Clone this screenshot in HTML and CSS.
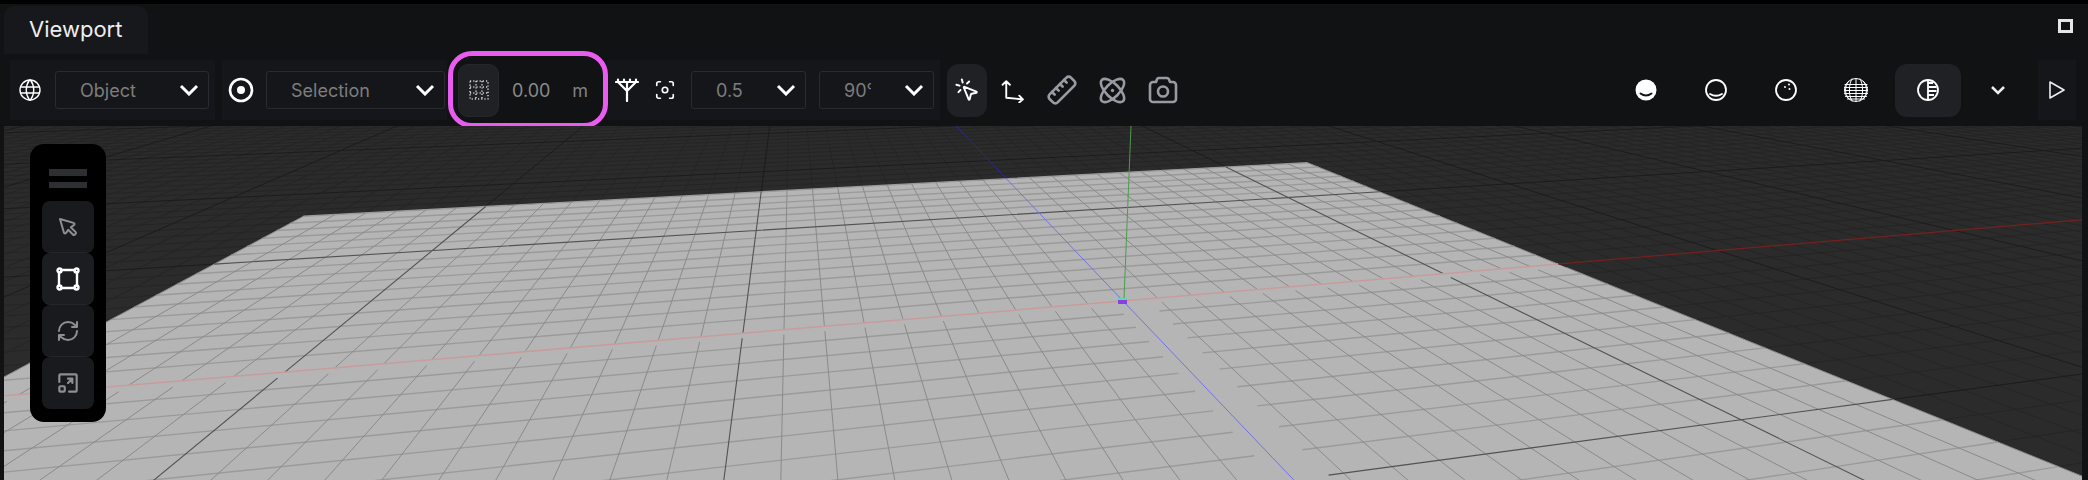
FILE: index.html
```html
<!DOCTYPE html>
<html lang="en">
<head>
    <meta charset="UTF-8">
    <meta name="viewport" content="width=device-width, initial-scale=1.0">
    <title>Viewport</title>
    <link rel="stylesheet" href="styles.css">
</head>
<body>
    <div class="app">
        <div class="tabbar">
            <div class="tab">Viewport</div>
            <div class="maximize"></div>
        </div>

        <div class="toolbar">
            <div class="group group-space">
                <svg class="icon icon-globe" width="24" height="24" viewBox="0 0 24 24"><circle cx="12" cy="12" r="10"/><path d="M2.8 9h18.4M2.800 15h18.4M11.500 2a17 17 0 0 0 0 20M12.500 2a17 17 0 0 1 0 20"/></svg>
                <div class="select select-object"><span>Object</span><svg class="chevron" width="20" height="12" viewBox="0 0 20 12"><path d="M2 2l8 8 8-8"/></svg></div>
            </div>
            <div class="group group-pivot">
                <svg class="icon icon-thick" width="26" height="26" viewBox="0 0 26 26"><circle cx="13" cy="13" r="11"/><circle class="fill" cx="13" cy="13" r="4"/></svg>
                <div class="select select-selection"><span>Selection</span><svg class="chevron" width="20" height="12" viewBox="0 0 20 12"><path d="M2 2l8 8 8-8"/></svg></div>
            </div>
            <div class="group group-snap">
                <div class="snap-btn">
                    <svg class="icon" width="20" height="20" viewBox="0 0 20 20"><path class="dots" d="M1 1H19V19H1ZM1 7H19M1 13H19M7 1V19M13 1V19"/></svg>
                </div>
                <span class="snap-value">0.00</span>
                <span class="snap-unit">m</span>
            </div>
            <div class="group group-angle">
                <svg class="icon icon-antenna" width="24" height="24" viewBox="0 0 24 24"><path d="M1 4H23M3 1.500V4M9 1.500V4M15 1.500V4M21 1.500V4M3 4l9 9 9-9M12 4V23"/></svg>
                <svg class="icon icon-focus" width="22" height="22" viewBox="0 0 24 24"><path d="M3 7V5a2 2 0 0 1 2-2h2M17 3h2a2 2 0 0 1 2 2v2M21 17v2a2 2 0 0 1-2 2h-2M7 21H5a2 2 0 0 1-2-2v-2"/><circle cx="12" cy="12" r="3"/></svg>
                <div class="select select-small"><span>0.5</span><svg class="chevron" width="20" height="12" viewBox="0 0 20 12"><path d="M2 2l8 8 8-8"/></svg></div>
                <div class="select select-small"><span class="clipped">90°</span><svg class="chevron" width="20" height="12" viewBox="0 0 20 12"><path d="M2 2l8 8 8-8"/></svg></div>
            </div>
            <div class="tool-active">
                <svg class="icon" width="26" height="26" viewBox="0 0 24 24"><path d="M14 4.100 12 6M5.100 8l-2.900-.8M6 12l-1.900 2M7.200 2.200 8 5.100"/><path d="M9.037 9.690a.498.498 0 0 1 .653-.653l11 4.500a.5.5 0 0 1-.074.949l-4.349 1.041a1 1 0 0 0-.74.739l-1.040 4.350a.5.5 0 0 1-.95.074z"/></svg>
            </div>
            <div class="tool">
                <svg class="icon" width="25" height="25" viewBox="0 0 24 24"><path d="M6 19V3M2.500 6.500 6 3l3.500 3.500M6 19l16 1.500M18.500 17l3.500 3.500-3.500 3"/></svg>
            </div>
            <div class="tool tool-grey">
                <svg class="icon flip" width="32" height="32" viewBox="0 0 24 24"><path d="M21.300 15.300a2.400 2.400 0 0 1 0 3.400l-2.600 2.600a2.400 2.400 0 0 1-3.400 0L2.700 8.700a2.410 2.410 0 0 1 0-3.400l2.600-2.600a2.410 2.410 0 0 1 3.400 0Z"/><path d="M14.500 12.500l2-2M11.500 9.500l2-2M8.500 6.500l2-2M17.500 15.500l2-2"/></svg>
            </div>
            <div class="tool tool-grey">
                <svg class="icon" width="31" height="31" viewBox="0 0 24 24"><circle class="fill" cx="12" cy="12" r="1.300"/><path d="M20.200 20.200c2.040-2.030.02-7.360-4.500-11.900-4.540-4.520-9.870-6.540-11.900-4.500-2.040 2.030-.02 7.360 4.500 11.900 4.540 4.520 9.870 6.540 11.900 4.500Z"/><path d="M15.700 15.700c4.520-4.540 6.540-9.870 4.500-11.900-2.030-2.040-7.360-.02-11.900 4.500-4.520 4.540-6.540 9.870-4.500 11.900 2.030 2.040 7.360.02 11.900-4.500Z"/></svg>
            </div>
            <div class="tool tool-last">
                <svg class="icon icon-camera" width="30" height="28" viewBox="0 0 30 28"><path d="M10.500 2H19a2 2 0 0 1 1.800 1.100L22 6H25a3 3 0 0 1 3 3V23a3 3 0 0 1-3 3H5a3 3 0 0 1-3-3V9a3 3 0 0 1 3-3H8L9 3.300A2 2 0 0 1 10.500 2Z"/><circle cx="15" cy="15.500" r="5"/></svg>
            </div>

            <div class="shading">
                <div class="shade">
                    <svg class="icon" width="24" height="24" viewBox="0 0 24 24"><circle class="fill" cx="12" cy="12" r="10.500"/><path class="cut" d="M6.500 15.500q5.500 4 11 0"/></svg>
                </div>
                <div class="shade">
                    <svg class="icon" width="24" height="24" viewBox="0 0 24 24"><circle cx="12" cy="12" r="10"/><path d="M6 16q6 3.500 12 0"/></svg>
                </div>
                <div class="shade">
                    <svg class="icon" width="24" height="24" viewBox="0 0 24 24"><circle cx="12" cy="12" r="10"/><circle class="fill" cx="11" cy="9" r="1"/><circle class="fill" cx="15" cy="6.500" r="1"/><circle class="fill" cx="15.500" cy="11" r="1"/></svg>
                </div>
                <div class="shade">
                    <svg class="icon icon-wire" width="26" height="26" viewBox="0 0 26 26"><circle cx="13" cy="13" r="11.500"/><path d="M2 7.500H24M1.500 10.500H24.500M1.500 13.500H24.500M1.500 16.500H24.500M2.500 19.500H23.500M4.500 22H21.500M13 1.500V24.500M9 2C5.500 7 5.500 19 9 24M17 2C20.500 7 20.500 19 17 24M5.500 4.500C1.500 10 1.500 16 5.500 21.500M20.500 4.500C24.500 10 24.500 16 20.500 21.500"/></svg>
                </div>
                <div class="shade-active">
                    <svg class="icon" width="24" height="24" viewBox="0 0 24 24"><circle cx="12" cy="12" r="10"/><path d="M12 2V22"/><path class="bars" d="M12 5H17M12 9H20.500M12 13H20.500M12 17H18"/></svg>
                </div>
                <div class="shade-more">
                    <svg class="chevron chevron-small" width="16" height="10" viewBox="0 0 16 10"><path d="M2 2l6 6 6-6"/></svg>
                </div>
                <div class="group group-play">
                    <svg class="icon icon-play" width="18" height="20" viewBox="0 0 18 20"><path d="M2 2L16 10L2 18Z"/></svg>
                </div>
            </div>
        </div>

        <div class="highlight"></div>

        <div class="scene">
            <svg class="scene-svg" viewBox="4 126 2078 354" preserveAspectRatio="none">
                <path id="outerMinor" class="outer-minor"/>
                <path id="outerMajor" class="outer-major"/>
                <polygon id="plane" class="plane"/>
                <path id="planeRows" class="plane-rows"/>
                <path id="planeMinor" class="plane-minor"/>
                <path id="planeMajor" class="plane-major"/>
                <path id="axisBlueOuter" class="axis-blue-outer"/>
                <path id="axisRedOuter" class="axis-red-outer"/>
                <path id="axisBlue" class="axis-blue"/>
                <path id="axisRed" class="axis-red"/>
                <path class="axis-green" d="M1124 299L1131 126"/>
                <rect class="origin-top" x="1118" y="298" width="9" height="3"/>
                <rect class="origin-box" x="1118" y="300" width="9" height="4"/>
            </svg>

            <div class="float-panel">
                <div class="handle"></div>
                <div class="handle"></div>
                <div class="float-btn">
                    <svg class="icon" width="24" height="24" viewBox="0 0 24 24"><path d="M7.904 17.563a1.200 1.200 0 0 0 2.228 .308l2.090 -3.093l4.907 4.907a1.067 1.067 0 0 0 1.509 0l1.047 -1.047a1.067 1.067 0 0 0 0 -1.509l-4.907 -4.907l3.113 -2.090a1.200 1.200 0 0 0 -.309 -2.228l-13.582 -3.904l3.904 13.563z"/></svg>
                </div>
                <div class="float-btn float-btn-active">
                    <svg class="icon icon-thick" width="24" height="24" viewBox="0 0 24 24"><path d="M5 3H19M5 21H19M3 5V19M21 5V19"/><circle cx="3.500" cy="3.500" r="2"/><circle cx="20.500" cy="3.500" r="2"/><circle cx="3.500" cy="20.500" r="2"/><circle cx="20.500" cy="20.500" r="2"/></svg>
                </div>
                <div class="float-btn">
                    <svg class="icon" width="24" height="24" viewBox="0 0 24 24"><path d="M3 12a9 9 0 0 1 9-9 9.750 9.750 0 0 1 6.740 2.740L21 8M21 3v5h-5M21 12a9 9 0 0 1-9 9 9.750 9.750 0 0 1-6.740-2.740L3 16M8 16H3v5"/></svg>
                </div>
                <div class="float-btn">
                    <svg class="icon" width="26" height="26" viewBox="0 0 24 24"><path d="M4 11V5a1 1 0 0 1 1-1h14a1 1 0 0 1 1 1v14a1 1 0 0 1-1 1h-6M12 12l4-4M12 8h4v4"/><rect x="4" y="15" width="5" height="5" rx="1"/></svg>
                </div>
            </div>
        </div>
    </div>

    <script src="scene.js"></script>
</body>
</html>
```
FILE: styles.css
```css
* {
    box-sizing: border-box;
}
html, body {
    margin: 0;
    height: 100%;
    overflow: hidden;
}
body {
    font-family: Inter, "Liberation Sans", sans-serif;
    background-color: #000;
}
.app {
    position: relative;
    display: flex;
    flex-direction: column;
    height: 476px;
    margin-top: 4px;
    background-color: #111214;
}

/* tabs */
.tabbar {
    display: flex;
    flex: none;
    height: 50px;
}
.tab {
    display: flex;
    align-items: center;
    width: 144px;
    height: 48px;
    margin: 2px 0 0 4px;
    padding-left: 25px;
    padding-bottom: 2px;
    border-radius: 10px 10px 0 0;
    background-color: #17181c;
    color: #eee;
    font-size: 22px;
}
.maximize {
    width: 15px;
    height: 14px;
    margin: 15px 15px 0 auto;
    border: 3px solid #e6e6e6;
}

/* toolbar */
.toolbar {
    display: flex;
    flex: none;
    align-items: center;
    height: 60px;
    margin-top: 6px;
    padding: 0 12px 0 10px;
}
.group {
    display: flex;
    flex: none;
    align-items: center;
    height: 60px;
    background-color: #15161a;
}
.group-space {
    width: 205px;
    margin-right: 7px;
    padding-left: 8px;
}
.group-space .select {
    margin-left: 13px;
}
.group-pivot {
    width: 225px;
    padding-left: 6px;
}
.group-pivot .select {
    margin-left: 12px;
}
.group-snap {
    width: 160px;
    padding-left: 11px;
    background-color: #111214;
}
.group-angle {
    width: 333px;
    padding-left: 8px;
}
.select {
    display: flex;
    flex: none;
    align-items: center;
    justify-content: space-between;
    height: 38px;
    padding: 0 9px 0 24px;
    border: 1px solid #2a2b30;
    border-radius: 3px;
    color: #7d7d7d;
    font-size: 18px;
}
.select-object {
    width: 154px;
}
.select-selection {
    width: 179px;
}
.select-small {
    width: 115px;
}
.select-small + .select-small {
    margin-left: 13px;
}
.clipped {
    display: block;
    width: 27px;
    overflow: hidden;
    white-space: nowrap;
}
.chevron {
    flex: none;
    fill: none;
    stroke: #fff;
    stroke-width: 3;
}
.chevron-small {
    stroke-width: 2.5;
    stroke: #eee;
}
.icon {
    flex: none;
    fill: none;
    stroke: #fff;
    stroke-width: 1.8;
    stroke-linecap: round;
    stroke-linejoin: round;
}
.icon .fill {
    fill: currentColor;
    stroke: none;
    color: #fff;
}
.icon-thick {
    stroke-width: 2.6;
}
.icon-globe {
    stroke-width: 1.4;
}
.flip {
    transform: scaleX(-1);
}
.dots {
    stroke-dasharray: 1.2 2;
    stroke-linecap: butt;
    stroke-width: 1.6;
    stroke: #ccc;
}
.snap-btn {
    display: flex;
    align-items: center;
    justify-content: center;
    width: 41px;
    height: 53px;
    border: 1px solid #26272b;
    border-radius: 10px;
    background-color: #202125;
}
.snap-value {
    margin-left: 13px;
    color: #8a8a8a;
    font-size: 18px;
}
.snap-unit {
    margin-left: 22px;
    color: #808080;
    font-size: 18px;
}
.icon-antenna {
    stroke-width: 2.2;
}
.icon-focus {
    margin-left: 15px;
    margin-right: 15px;
}
.tool-active {
    display: flex;
    align-items: center;
    justify-content: center;
    width: 40px;
    height: 53px;
    margin-left: 7px;
    border-radius: 12px;
    background-color: #202125;
}
.tool {
    display: flex;
    align-items: center;
    justify-content: center;
    width: 50px;
}
.tool-last {
    width: 52px;
}
.tool-grey .icon {
    stroke: #9a9aa2;
    stroke-width: 2;
}
.tool-grey .icon .fill {
    color: #9a9aa2;
}
.icon-camera {
    stroke: #9a9aa2;
    stroke-width: 2.6;
}
.shading {
    display: flex;
    align-items: center;
    margin-left: auto;
}
.shade {
    display: flex;
    align-items: center;
    justify-content: center;
    width: 70px;
}
.shade-active {
    display: flex;
    align-items: center;
    justify-content: center;
    width: 66px;
    height: 53px;
    margin-left: 4px;
    border-radius: 12px;
    background-color: #202125;
}
.shade-more {
    display: flex;
    align-items: center;
    justify-content: center;
    width: 74px;
}
.group-play {
    justify-content: center;
    width: 38px;
    margin-left: 3px;
}
.icon-play {
    stroke-width: 1.6;
    stroke: #eee;
}
.icon .cut {
    stroke: #111214;
    stroke-width: 2;
}
.icon .bars {
    stroke-width: 2;
    stroke-linecap: butt;
}
.icon-wire {
    stroke-width: 1;
}

/* pink mark drawn over the snap control */
.highlight {
    position: absolute;
    left: 448px;
    top: 47px;
    width: 160px;
    height: 77px;
    border: 5px solid #e95cf0;
    border-radius: 24px;
}

/* 3d view */
.scene {
    position: relative;
    flex: 1;
    min-height: 0;
    margin: 6px 6px 0 4px;
    overflow: hidden;
    background-color: #2b2b2b;
}
.scene-svg {
    display: block;
    width: 2078px;
    height: 354px;
}
.scene-svg path {
    fill: none;
}
.outer-minor {
    stroke: #252525;
    stroke-width: 1;
}
.outer-major {
    stroke: #1c1c1c;
    stroke-width: 1;
}
.plane {
    fill: #b5b5b5;
}
.plane-rows {
    stroke: #9a9a9a;
    stroke-width: 1.4;
}
.plane-minor {
    stroke: #8a8a8a;
    stroke-width: 1;
}
.plane-major {
    stroke: #525252;
    stroke-width: 1.1;
}
.axis-blue-outer {
    stroke: #30308a;
    stroke-width: 1;
}
.axis-red-outer {
    stroke: #6e2222;
    stroke-width: 1.5;
}
.axis-blue {
    stroke: #7273e2;
    stroke-width: 1;
}
.axis-red {
    stroke: #c99c9c;
    stroke-width: 1.5;
}
.axis-green {
    stroke: #4f9a4f;
    stroke-width: 1;
}
.origin-top {
    fill: #63d8a8;
}
.origin-box {
    fill: #8a3fe0;
}
.float-panel {
    position: absolute;
    left: 26px;
    top: 18px;
    width: 76px;
    height: 278px;
    padding: 25px 12px 13px;
    border-radius: 14px;
    background-color: #000;
}
.handle {
    width: 38px;
    height: 7px;
    margin: 0 auto 6px;
    background-color: #2e2f33;
}
.handle + .handle {
    height: 6px;
    margin-bottom: 13px;
}
.float-btn {
    display: flex;
    align-items: center;
    justify-content: center;
    height: 52px;
    border-bottom: 1px solid #24252a;
    border-radius: 8px;
    background-color: #191a1e;
}
.float-btn:last-child {
    border-bottom: 0;
}
.float-btn .icon {
    stroke: #8e8e93;
    stroke-width: 2;
}
.float-btn-active {
    background-color: #1c1d21;
}
.float-btn .icon-thick {
    stroke: #fff;
    stroke-width: 2.4;
}
```
FILE: scene.js
```js
// ground plane projection, measured from the vanishing points of the view
const OX = 1123, OY = 301;
const VX_S = 5215, VX_F = 792, VY = -46;
const WS = 0.0085, WF = 0.034;

function pt(s, f) {
    const d = 1 + WS * s + WF * f;
    const x = (OX + WS * s * VX_S + WF * f * VX_F) / d;
    const y = (OY + (WS * s + WF * f) * VY) / d;
    return x.toFixed(1) + ' ' + y.toFixed(1);
}

function seg(s1, f1, s2, f2) {
    return 'M' + pt(s1, f1) + 'L' + pt(s2, f2);
}

// the grid of the dark floor
let outerMinor = '', outerMajor = '';
for (let s = -110; s <= 180; s++) {
    const fMin = Math.max(-24, (0.03 - 1 - WS * s) / WF);
    const d = seg(s, fMin, s, 70);
    if (s % 10 === 0) outerMajor += d; else outerMinor += d;
}
for (let f = -24; f <= 70; f++) {
    const sMin = Math.max(-110, (0.03 - 1 - WF * f) / WS);
    const d = seg(sMin, f, 180, f);
    if (f % 10 === 0) outerMajor += d; else outerMinor += d;
}

// the light plane, its lines leave a small gap around the axes
const S0 = -26, S1 = 14, F0 = -20, F1 = 16;
let planeRows = '', planeMinor = '', planeMajor = '';
for (let s = S0; s <= S1; s++) {
    if (s === 0) continue;
    const d = seg(s, F1, s, 0) + seg(s, -0.35, s, s < -20 ? -17 : F0);
    if (s % 10 === 0) planeMajor += d; else planeMinor += d;
}
for (let f = F0; f <= F1; f++) {
    if (f === 0) continue;
    const d = f < 0 ? seg(S0, f, -0.3, f) + seg(0.7, f, S1, f) : seg(S0, f, S1, f);
    if (f % 10 === 0) planeMajor += d; else planeRows += d;
}

document.getElementById('outerMinor').setAttribute('d', outerMinor);
document.getElementById('outerMajor').setAttribute('d', outerMajor);
document.getElementById('planeRows').setAttribute('d', planeRows);
document.getElementById('planeMinor').setAttribute('d', planeMinor);
document.getElementById('planeMajor').setAttribute('d', planeMajor);
document.getElementById('plane').setAttribute('points',
    [pt(S0, F1), pt(S1, F1), pt(S1, F0), pt(S0, -17)].join(' '));

document.getElementById('axisRedOuter').setAttribute('d', seg(S1, 0, 150, 0));
document.getElementById('axisRed').setAttribute('d', seg(S0, 0, S1, 0));
document.getElementById('axisBlueOuter').setAttribute('d', seg(0, F1, 0, 60));
document.getElementById('axisBlue').setAttribute('d', seg(0, F0, 0, F1));
```
